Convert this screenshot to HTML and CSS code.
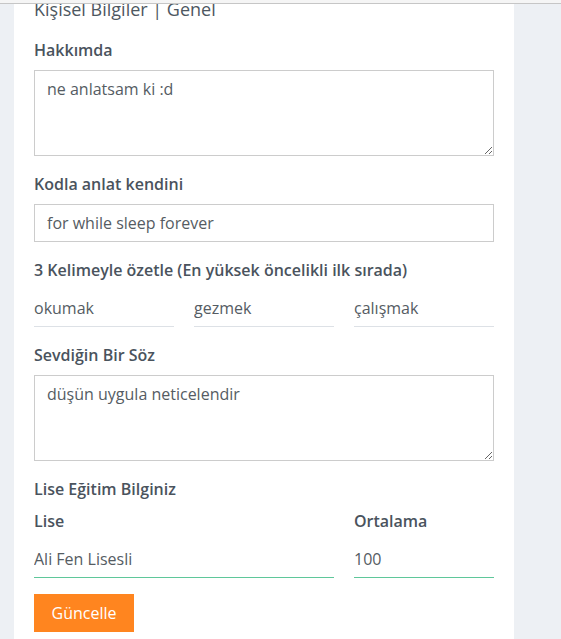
FILE: index.html
```html
<!DOCTYPE html>
<html lang="tr">
<head>
<meta charset="utf-8">
<title>Kişisel Bilgiler</title>
<link rel="stylesheet" href="styles.css">
</head>
<body>
<div class="topbar"></div>
<div class="page">
  <div class="card">
    <h3 class="title">Kişisel Bilgiler | Genel</h3>
    <div class="group">
      <label class="label">Hakkımda</label>
      <textarea class="box area">ne anlatsam ki :d</textarea>
    </div>
    <div class="group">
      <label class="label">Kodla anlat kendini</label>
      <input class="box" type="text" value="for while sleep forever">
    </div>
    <div class="group">
      <label class="label">3 Kelimeyle özetle (En yüksek öncelikli ilk sırada)</label>
      <div class="three">
        <input class="line" type="text" value="okumak">
        <input class="line" type="text" value="gezmek">
        <input class="line" type="text" value="çalışmak">
      </div>
    </div>
    <div class="group">
      <label class="label">Sevdiğin Bir Söz</label>
      <textarea class="box area">düşün uygula neticelendir</textarea>
    </div>
    <div class="section">Lise Eğitim Bilginiz</div>
    <div class="school">
      <div class="col">
        <label class="label">Lise</label>
        <input class="line ok" type="text" value="Ali Fen Lisesli">
      </div>
      <div class="col">
        <label class="label">Ortalama</label>
        <input class="line ok" type="text" value="100">
      </div>
    </div>
    <button class="btn" type="button">Güncelle</button>
  </div>
</div>
</body>
</html>
```
FILE: styles.css
```css
html, body {
  margin: 0;
  padding: 0;
  background: #edf0f4;
  font-family: "Open Sans", "Noto Sans", sans-serif;
  color: #4a535d;
}
.topbar {
  position: fixed;
  top: 0;
  left: 0;
  right: 0;
  height: 3px;
  background: #f5f5f5;
  border-bottom: 1px solid #c6c6c6;
  z-index: 5;
}
.page {
  padding-left: 14px;
}
.card {
  width: 460px;
  background: #fff;
  padding: 0 20px 8px;
}
.title {
  margin: 0 0 22px;
  font-size: 18px;
  line-height: 18px;
  font-weight: 400;
  color: #4d5761;
}
.group {
  margin-bottom: 18px;
}
.label {
  display: block;
  font-size: 16px;
  line-height: 20px;
  font-weight: 600;
  color: #4a535d;
  margin-bottom: 10px;
}
.box {
  display: block;
  box-sizing: border-box;
  width: 460px;
  height: 38px;
  margin: 0;
  padding: 6px 12px;
  border: 1px solid #cccccc;
  border-radius: 0;
  font-family: "Open Sans", "Noto Sans", sans-serif;
  font-size: 16px;
  line-height: 24px;
  color: #555c63;
  background: #fff;
  outline: none;
}
.area {
  height: 86px;
  resize: vertical;
}
.three {
  display: grid;
  grid-template-columns: 140px 140px 140px;
  column-gap: 20px;
}
.line {
  display: block;
  box-sizing: border-box;
  width: 100%;
  height: 37px;
  margin: 0;
  padding: 6px 0;
  border: 0;
  border-bottom: 1px solid #dde1e6;
  border-radius: 0;
  font-family: "Open Sans", "Noto Sans", sans-serif;
  font-size: 16px;
  line-height: 24px;
  color: #555c63;
  background: transparent;
  outline: none;
}
.line.ok {
  border-bottom-color: #5fc79a;
}
.section {
  font-size: 16px;
  line-height: 20px;
  font-weight: 600;
  color: #4a535d;
  margin-bottom: 12px;
}
.school {
  display: grid;
  grid-template-columns: 300px 140px;
  column-gap: 20px;
  margin-bottom: 16px;
}
.btn {
  display: block;
  box-sizing: border-box;
  width: 100px;
  height: 38px;
  padding: 0;
  border: 0;
  border-radius: 0;
  background: #ff851f;
  color: #fff;
  font-family: "Open Sans", "Noto Sans", sans-serif;
  font-size: 16px;
  line-height: 24px;
}
```
